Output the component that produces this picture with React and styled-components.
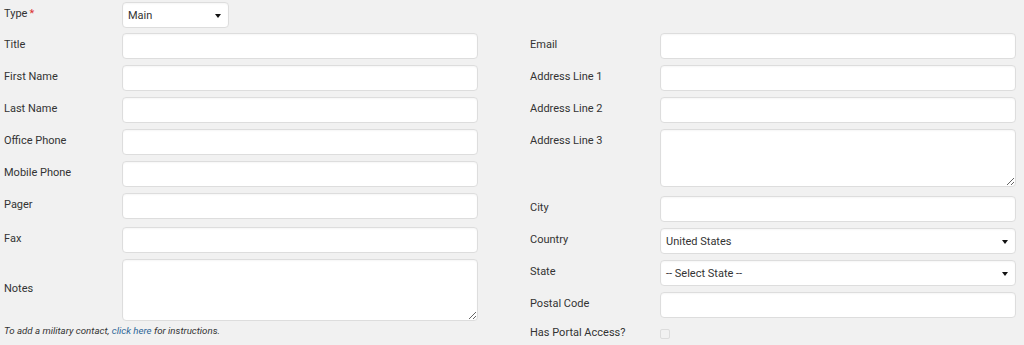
import React from "react";
import styled, { createGlobalStyle } from "styled-components";

const Global = createGlobalStyle`
  html, body { margin: 0; padding: 0; background: #f1f1f1; }
  body { font-family: Roboto, "Noto Sans", Arial, sans-serif; color: #333; }
`;

const Page = styled.div`
  display: grid;
  grid-template-columns: 474px 486px;
  column-gap: 52px;
  padding: 2px 0 0 4px;
  width: 1024px;
  height: 345px;
  box-sizing: border-box;
  overflow: hidden;
`;

const Column = styled.div`
  display: flex;
  flex-direction: column;
  padding-top: ${(p) => p.$top || 0}px;
`;

const Row = styled.div`
  display: grid;
  grid-template-columns: ${(p) => p.$labelWidth}px 356px;
  align-items: ${(p) => (p.$top ? "start" : "center")};
  margin-top: ${(p) => (p.$mt === undefined ? 6 : p.$mt)}px;
`;

const Label = styled.label`
  font-size: 11px;
  line-height: 14px;
  color: #333;
  padding-top: ${(p) => (p.$top ? 5 : 0)}px;
  margin-top: ${(p) => (p.$top ? 0 : -2)}px;
`;

const Req = styled.span`
  color: #dc3232;
  margin-left: 2px;
`;

const Input = styled.input`
  box-sizing: border-box;
  height: 26px;
  width: 100%;
  border: 1px solid #dddddd;
  border-radius: 4px;
  background: #fff;
  box-shadow: inset 0 1px 2px rgba(0, 0, 0, 0.04);
  margin: 0;
  padding: 0 6px;
  font-family: inherit;
  font-size: 11px;
  outline: none;
`;

const TextArea = styled.textarea`
  box-sizing: border-box;
  display: block;
  height: ${(p) => p.$h}px;
  width: 100%;
  border: 1px solid #dddddd;
  border-radius: 4px;
  background: #fff;
  box-shadow: inset 0 1px 2px rgba(0, 0, 0, 0.04);
  margin: 0;
  padding: 4px 6px;
  font-family: inherit;
  font-size: 11px;
  outline: none;
  resize: vertical;
`;

const SelectBox = styled.div`
  position: relative;
  box-sizing: border-box;
  height: 26px;
  width: ${(p) => (p.$w ? `${p.$w}px` : "100%")};
  border: 1px solid #dddddd;
  border-radius: 4px;
  background: #fff;
  box-shadow: inset 0 1px 2px rgba(0, 0, 0, 0.04);
  display: flex;
  align-items: center;
  padding: 0 5px;
  font-size: 11px;
  color: #333;
`;

const Caret = styled.span`
  position: absolute;
  right: 7px;
  top: 11px;
  width: 0;
  height: 0;
  border-left: 3px solid transparent;
  border-right: 3px solid transparent;
  border-top: 4px solid #111;
`;

const Checkbox = styled.span`
  display: block;
  box-sizing: border-box;
  width: 10px;
  height: 10px;
  border: 1px solid #dcdcdc;
  border-radius: 2px;
  background: #f1f1f1;
`;

const Note = styled.p`
  margin: 4px 0 0;
  font-size: 9.7px;
  font-style: italic;
  color: #333;
`;

const Link = styled.a`
  color: #2a6496;
  text-decoration: none;
`;

function Select({ value, w }) {
  return (
    <SelectBox $w={w}>
      {value}
      <Caret />
    </SelectBox>
  );
}

export default function App() {
  return (
    <>
      <Global />
      <Page>
        <Column>
          <Row $labelWidth={118} $mt={0}>
            <Label>
              Type<Req>*</Req>
            </Label>
            <Select value="Main" w={107} />
          </Row>
          <Row $labelWidth={118} $mt={5}>
            <Label>Title</Label>
            <Input />
          </Row>
          <Row $labelWidth={118}>
            <Label>First Name</Label>
            <Input />
          </Row>
          <Row $labelWidth={118}>
            <Label>Last Name</Label>
            <Input />
          </Row>
          <Row $labelWidth={118}>
            <Label>Office Phone</Label>
            <Input />
          </Row>
          <Row $labelWidth={118}>
            <Label>Mobile Phone</Label>
            <Input />
          </Row>
          <Row $labelWidth={118}>
            <Label>Pager</Label>
            <Input />
          </Row>
          <Row $labelWidth={118} $mt={8}>
            <Label>Fax</Label>
            <Input />
          </Row>
          <Row $labelWidth={118}>
            <Label>Notes</Label>
            <TextArea $h={62} />
          </Row>
          <Note>
            To add a military contact, <Link href="#">click here</Link> for
            instructions.
          </Note>
        </Column>
        <Column $top={31}>
          <Row $labelWidth={130} $mt={0}>
            <Label>Email</Label>
            <Input />
          </Row>
          <Row $labelWidth={130}>
            <Label>Address Line 1</Label>
            <Input />
          </Row>
          <Row $labelWidth={130}>
            <Label>Address Line 2</Label>
            <Input />
          </Row>
          <Row $labelWidth={130} $top>
            <Label $top>Address Line 3</Label>
            <TextArea $h={58} />
          </Row>
          <Row $labelWidth={130} $mt={9}>
            <Label>City</Label>
            <Input />
          </Row>
          <Row $labelWidth={130}>
            <Label>Country</Label>
            <Select value="United States" />
          </Row>
          <Row $labelWidth={130}>
            <Label>State</Label>
            <Select value="-- Select State --" />
          </Row>
          <Row $labelWidth={130}>
            <Label>Postal Code</Label>
            <Input />
          </Row>
          <Row $labelWidth={130} $mt={10}>
            <Label>Has Portal Access?</Label>
            <Checkbox />
          </Row>
        </Column>
      </Page>
    </>
  );
}
